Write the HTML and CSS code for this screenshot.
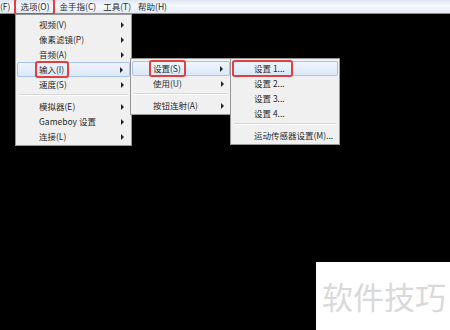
FILE: index.html
```html
<!DOCTYPE html>
<html lang="zh-CN">
<head>
  <meta charset="UTF-8" />
  <title>选项菜单</title>
  <link rel="stylesheet" href="styles.css">
</head>
<body>

  <!-- Menu bar -->
  <header class="menubar">
    <span class="bar-item cut">(F)</span>
    <span class="bar-item marked">选项(O)</span>
    <span class="bar-item">金手指(C)</span>
    <span class="bar-item">工具(T)</span>
    <span class="bar-item">帮助(H)</span>
  </header>

  <!-- Options menu -->
  <ul class="menu menu-main">
    <li class="item sub">视频(V)</li>
    <li class="item sub">像素滤镜(P)</li>
    <li class="item sub">音频(A)</li>
    <li class="item sub active"><span class="marked">输入(I)</span></li>
    <li class="item sub">速度(S)</li>
    <li class="sep"></li>
    <li class="item sub">模拟器(E)</li>
    <li class="item sub">Gameboy 设置</li>
    <li class="item sub">连接(L)</li>
  </ul>

  <!-- Input submenu -->
  <ul class="menu menu-input">
    <li class="item sub active"><span class="marked">设置(S)</span></li>
    <li class="item sub">使用(U)</li>
    <li class="sep"></li>
    <li class="item sub">按钮连射(A)</li>
  </ul>

  <!-- Config submenu -->
  <ul class="menu menu-config">
    <li class="item active"><span class="marked wide">设置 1...</span></li>
    <li class="item">设置 2...</li>
    <li class="item">设置 3...</li>
    <li class="item">设置 4...</li>
    <li class="sep"></li>
    <li class="item">运动传感器设置(M)...</li>
  </ul>

  <div class="watermark">软件技巧</div>

</body>
</html>
```

FILE: styles.css
```css
body {
  margin: 0;
  width: 450px;
  height: 330px;
  background: #000;
  font-family: "Noto Sans CJK SC", "Noto Sans", sans-serif;
  font-size: 8.5px;
  color: #2a2a2a;
  position: relative;
  overflow: hidden;
}

.menubar {
  height: 13px;
  display: flex;
  align-items: center;
  background: linear-gradient(#dfe7f4, #f7f9fd 45%, #e3e9f3);
  border-bottom: 1px solid #8a8f98;
}

.bar-item {
  padding: 0 3px;
  margin-right: 1px;
  line-height: 13px;
  white-space: nowrap;
}

.bar-item.cut {
  padding: 0 1px 0 0;
  margin-right: 5px;
}

.bar-item.marked {
  padding: 0 3px 0 4px;
  margin-right: 4px;
}

.marked {
  box-shadow: 0 0 0 2px #e2403f;
  border-radius: 1px;
}

.menu {
  position: absolute;
  margin: 0;
  padding: 2px 0 1px;
  list-style: none;
  background: #f0f0f0;
  border: 1px solid #979797;
  box-sizing: border-box;
}

.menu-main {
  left: 15px;
  top: 14px;
  width: 117px;
}

.menu-input {
  left: 130px;
  top: 58px;
  width: 102px;
  padding-top: 2px;
}

.menu-config {
  left: 230px;
  top: 58px;
  width: 110px;
  padding-top: 2px;
}

.item {
  height: 15px;
  line-height: 15px;
  padding-left: 22px;
  margin: 0 1px;
  position: relative;
  white-space: nowrap;
}

.menu-input .item {
  padding-left: 21px;
}

.item .marked {
  display: inline-block;
  line-height: 13px;
  padding: 0 3px 0 2px;
  margin-left: -2px;
}

.item .marked.wide {
  margin-left: -20px;
  padding-left: 20px;
  padding-right: 6px;
}

.item.active {
  background: linear-gradient(#eef4fc, #dce8f8);
  border: 1px solid #a8c4ea;
  border-radius: 2px;
  height: 13px;
  line-height: 13px;
  margin: 0 1px;
  padding-left: 21px;
}

.menu-input .item.active {
  padding-left: 20px;
}

.sub::after {
  content: "";
  position: absolute;
  right: 6px;
  top: 50%;
  margin-top: -3px;
  border-left: 3px solid #222;
  border-top: 3px solid transparent;
  border-bottom: 3px solid transparent;
}

.sep {
  height: 1px;
  margin: 2px 3px 3px 3px;
  background: #d7d7d7;
  border-bottom: 1px solid #fff;
}

.watermark {
  position: absolute;
  left: 316px;
  top: 262px;
  width: 134px;
  height: 68px;
  background: #fff;
  color: #d9d9d9;
  font-size: 31px;
  line-height: 68px;
  padding-left: 6px;
  box-sizing: border-box;
}
```
